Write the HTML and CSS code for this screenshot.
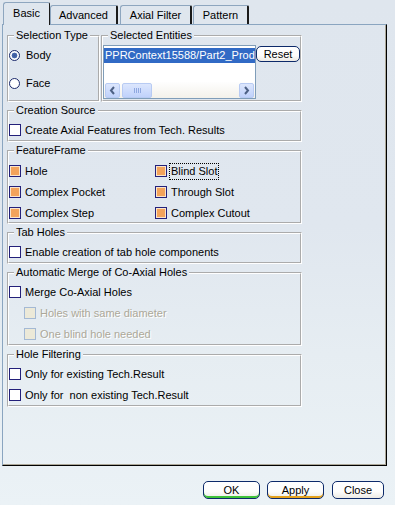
FILE: index.html
```html
<!DOCTYPE html>
<html>
<head>
<meta charset="utf-8">
<link rel="stylesheet" href="styles.css">
</head>
<body>
<div class="dialog">
  <div class="tabs">
    <div class="tab tab-basic active">Basic</div>
    <div class="tab tab-adv">Advanced</div>
    <div class="tab tab-axial">Axial Filter</div>
    <div class="tab tab-pattern">Pattern</div>
  </div>
  <div class="panel">
    <div class="toprow">
      <fieldset class="grp grp-seltype">
        <legend>Selection Type</legend>
        <div class="row radio-row first"><span class="radio on"></span><span>Body</span></div>
        <div class="row radio-row second"><span class="radio"></span><span>Face</span></div>
      </fieldset>
      <fieldset class="grp grp-selent">
        <legend>Selected Entities</legend>
        <div class="entities">
          <div class="list">
            <div class="item">PPRContext15588/Part2_Prod</div>
            <div class="list-space"></div>
            <div class="hscroll">
              <span class="sbtn"><svg width="15" height="15" viewBox="0 0 15 15"><path d="M9 4 L6 7.5 L9 11" fill="none" stroke="#4d6185" stroke-width="2"/></svg></span>
              <span class="thumb"><svg width="30" height="15" viewBox="0 0 30 15"><path d="M12.5 5v5M14.5 5v5M16.5 5v5M18.5 5v5" stroke="#8fa8e0" stroke-width="1"/></svg></span>
              <span class="sspace"></span>
              <span class="sbtn"><svg width="15" height="15" viewBox="0 0 15 15"><path d="M6 4 L9 7.5 L6 11" fill="none" stroke="#4d6185" stroke-width="2"/></svg></span>
            </div>
          </div>
          <div class="btn reset">Reset</div>
        </div>
      </fieldset>
    </div>
    <fieldset class="grp">
      <legend>Creation Source</legend>
      <div class="row"><span class="cb"></span><span>Create Axial Features from Tech. Results</span></div>
    </fieldset>
    <fieldset class="grp grp-ff">
      <legend>FeatureFrame</legend>
      <div class="ffgrid">
        <div class="row"><span class="cb on"></span><span>Hole</span></div>
        <div class="row"><span class="cb on"></span><span class="focus">Blind Slot</span></div>
        <div class="row"><span class="cb on"></span><span>Complex Pocket</span></div>
        <div class="row"><span class="cb on"></span><span>Through Slot</span></div>
        <div class="row"><span class="cb on"></span><span>Complex Step</span></div>
        <div class="row"><span class="cb on"></span><span>Complex Cutout</span></div>
      </div>
    </fieldset>
    <fieldset class="grp">
      <legend>Tab Holes</legend>
      <div class="row"><span class="cb"></span><span>Enable creation of tab hole components</span></div>
    </fieldset>
    <fieldset class="grp">
      <legend>Automatic Merge of Co-Axial Holes</legend>
      <div class="rows">
        <div class="row"><span class="cb"></span><span>Merge Co-Axial Holes</span></div>
        <div class="row sub disabled"><span class="cb dis"></span><span>Holes with same diameter</span></div>
        <div class="row sub disabled"><span class="cb dis"></span><span>One blind hole needed</span></div>
      </div>
    </fieldset>
    <fieldset class="grp">
      <legend>Hole Filtering</legend>
      <div class="rows">
        <div class="row"><span class="cb"></span><span>Only for existing Tech.Result</span></div>
        <div class="row"><span class="cb"></span><span>Only for &nbsp;non existing Tech.Result</span></div>
      </div>
    </fieldset>
  </div>
  <div class="buttons">
    <div class="btn dlg ok">OK</div>
    <div class="btn dlg apply">Apply</div>
    <div class="btn dlg close">Close</div>
  </div>
</div>
</body>
</html>
```
FILE: styles.css
```css
html, body {
  margin: 0;
  padding: 0;
}
body {
  width: 395px;
  height: 505px;
  overflow: hidden;
  background: linear-gradient(to bottom, #dfe6ee 0%, #e0e7ef 45%, #e6edf2 70%, #ebf2f6 100%);
  font-family: "Liberation Sans", Arial, sans-serif;
  font-size: 11px;
  color: #000;
}
.dialog {
  display: flex;
  flex-direction: column;
}
.tabs {
  display: flex;
  align-items: flex-end;
  height: 24px;
  padding-left: 3px;
  position: relative;
  z-index: 2;
}
.tab {
  box-sizing: border-box;
  height: 19px;
  line-height: 18px;
  text-align: center;
  border-left: 1px solid #8ea6bf;
  border-top: 1px solid #8ea6bf;
  border-right: 2px solid #1a1a1a;
  border-top-left-radius: 3px;
  border-top-right-radius: 2px;
  background: #dfe6ee;
}
.tab.active {
  height: 23px;
  line-height: 21px;
  margin-bottom: -1px;
  border-right: 1px solid #1a1a1a;
  background: #dfe6ee;
}
.tab-basic { width: 47px; }
.tab-adv { width: 68px; }
.tab-axial { width: 72px; margin-left: 2px; }
.tab-pattern { width: 56px; margin-left: 1px; }

.panel {
  box-sizing: border-box;
  margin-left: 2px;
  width: 385px;
  height: 442px;
  border-left: 1px solid #8aa5c0;
  border-top: 1px solid #8aa5c0;
  border-right: 1px solid #000;
  border-bottom: 1px solid #000;
  box-shadow: inset -1px -1px 0 #aca899;
  padding: 4px 0 0 4px;
  display: flex;
  flex-direction: column;
  gap: 2px;
}
.toprow {
  display: flex;
  gap: 1px;
}
.grp {
  box-sizing: border-box;
  width: 295px;
  margin: 0;
  padding: 3px 0 0 0;
  border: 2px groove #fff;
  min-width: 0;
}
.grp-ff {
  padding-top: 4px;
  height: 80px;
}
.grp legend {
  margin-left: 5px;
  padding: 0 2px;
  line-height: 13px;
  height: 13px;
}
.grp-seltype {
  width: 93px;
  height: 73px;
}
.grp-selent {
  width: 201px;
  height: 73px;
  padding-top: 3px;
}
.row {
  display: flex;
  align-items: center;
  height: 20px;
  gap: 4px;
  white-space: nowrap;
}
.rows {
  display: flex;
  flex-direction: column;
  gap: 1px;
}
.radio-row { gap: 6px; }
.radio-row.second { margin-top: 8px; }
.radio {
  box-sizing: border-box;
  width: 11px;
  height: 11px;
  border-radius: 50%;
  border: 1px solid #1c2a6c;
  background: #fff;
  position: relative;
}
.radio.on {
  background: radial-gradient(circle, #3c5a9c 0, #4a6aae 2.6px, #fff 3.2px);
}
.cb {
  box-sizing: border-box;
  width: 12px;
  height: 12px;
  border: 1px solid #23207a;
  background: #fff;
  flex: none;
}
.cb.on {
  background: #f3a35b;
  box-shadow: inset 0 0 0 1px #f9e4cc;
}
.cb.dis {
  border-color: #a4b9d4;
  background: #ece9d8;
}
.sub { padding-left: 15px; }
.disabled {
  color: #aca899;
  text-shadow: 1px 1px 0 #fff;
}
.ffgrid {
  display: grid;
  grid-template-columns: 146px 1fr;
  grid-auto-rows: 20px;
  row-gap: 1px;
}
.focus {
  margin-left: -2px;
  padding: 1px 1px;
  line-height: 13px;
  border: 1px dotted #000;
}

.entities {
  display: flex;
  align-items: flex-start;
}
.list {
  box-sizing: border-box;
  width: 153px;
  height: 54px;
  border: 1px solid #7f9db9;
  background: #fff;
  display: flex;
  flex-direction: column;
  overflow: hidden;
}
.item {
  margin-top: 2px;
  height: 15px;
  line-height: 15px;
  padding-left: 1px;
  background: #316ac5;
  color: #fff;
  white-space: nowrap;
  overflow: hidden;
}
.list-space { flex: 1; }
.hscroll {
  height: 16px;
  display: flex;
  align-items: center;
  padding: 0 1px;
  background: linear-gradient(to bottom, #fefefe, #f3f1ea);
}
.sbtn, .thumb {
  box-sizing: border-box;
  height: 15px;
  border: 1px solid #b8cbf3;
  border-radius: 2px;
  background: linear-gradient(to bottom, #dce6fd, #c0d2fb);
  display: flex;
}
.sbtn { width: 15px; }
.sbtn svg, .thumb svg { margin: -1px; }
.thumb { width: 30px; margin-left: 2px; }
.sspace { flex: 1; }

.btn {
  box-sizing: border-box;
  border: 1px solid #0d2a6a;
  border-radius: 5px;
  background: linear-gradient(to bottom, #ffffff 0%, #fdfdfc 60%, #eceae4 100%);
  text-align: center;
}
.reset {
  width: 44px;
  height: 16px;
  line-height: 14px;
  margin-top: 1px;
}
.buttons {
  display: flex;
  justify-content: flex-end;
  gap: 7px;
  margin-top: 15px;
  padding-right: 11px;
}
.dlg {
  height: 18px;
  line-height: 16px;
  width: 57px;
}
.dlg.close { width: 52px; margin-left: 1px; }
.ok { box-shadow: inset 0 -2px 0 #3fc33a; }
.apply { box-shadow: inset 0 -2px 0 #e5a21c; }
```
